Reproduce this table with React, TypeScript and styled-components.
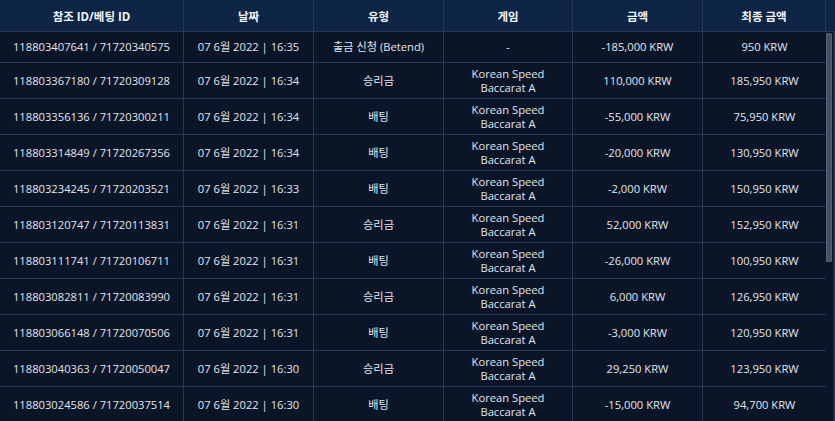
import React from "react";
import styled, { createGlobalStyle } from "styled-components";

const Global = createGlobalStyle`
  html, body { margin: 0; padding: 0; background: #0a1628; }
  body { font-family: "Open Sans", "Noto Sans CJK KR", sans-serif; }
`;

const COLS = "184px 130px 130px 129px 130px 1fr";
const LINE = "#26384f";

const Wrap = styled.div`
  width: 835px;
  height: 421px;
  display: flex;
  flex-direction: column;
  background: #0a1628;
  overflow: hidden;
`;

const HeadRow = styled.div`
  display: grid;
  grid-template-columns: ${COLS} 9px;
  height: 32px;
  flex: none;
  background: #0f2545;
  border-bottom: 1px solid ${LINE};
  box-sizing: border-box;
`;

const HeadCell = styled.div<{ $last?: boolean }>`
  display: flex;
  align-items: center;
  justify-content: center;
  color: #f2f5f9;
  font-weight: 700;
  font-size: 11.5px;
  border-right: ${(p) => (p.$last ? "none" : `1px solid ${LINE}`)};
`;

const BodyArea = styled.div`
  flex: 1;
  min-height: 0;
  display: flex;
`;

const Body = styled.div`
  flex: 1;
  overflow: hidden;
`;

const Track = styled.div`
  width: 9px;
  flex: none;
  display: flex;
  padding-top: 1px;
  box-sizing: border-box;
  background: #0a1628;
  border-right: 2px solid #1f3049;
`;

const Thumb = styled.div`
  width: 6px;
  height: 229px;
  background: #475163;
  border: 1px solid #566072;
  box-sizing: border-box;
  border-radius: 1px;
`;

const Row = styled.div`
  display: grid;
  grid-template-columns: ${COLS};
  min-height: 31px;
  border-bottom: 1px solid ${LINE};
  box-sizing: border-box;
`;

const Cell = styled.div<{ $last?: boolean }>`
  display: flex;
  align-items: center;
  justify-content: center;
  text-align: center;
  padding: 3.5px 6px;
  color: #e1e5ec;
  font-size: 11.2px;
  line-height: 14px;
  border-right: ${(p) => (p.$last ? "none" : `1px solid ${LINE}`)};
`;

type Tx = [string, string, string, string, string, string];

const GAME = "Korean Speed\nBaccarat A";

const rows: Tx[] = [
  ["118803407641 / 71720340575", "07 6월 2022 | 16:35", "출금 신청 (Betend)", "-", "-185,000 KRW", "950 KRW"],
  ["118803367180 / 71720309128", "07 6월 2022 | 16:34", "승리금", GAME, "110,000 KRW", "185,950 KRW"],
  ["118803356136 / 71720300211", "07 6월 2022 | 16:34", "배팅", GAME, "-55,000 KRW", "75,950 KRW"],
  ["118803314849 / 71720267356", "07 6월 2022 | 16:34", "배팅", GAME, "-20,000 KRW", "130,950 KRW"],
  ["118803234245 / 71720203521", "07 6월 2022 | 16:33", "배팅", GAME, "-2,000 KRW", "150,950 KRW"],
  ["118803120747 / 71720113831", "07 6월 2022 | 16:31", "승리금", GAME, "52,000 KRW", "152,950 KRW"],
  ["118803111741 / 71720106711", "07 6월 2022 | 16:31", "배팅", GAME, "-26,000 KRW", "100,950 KRW"],
  ["118803082811 / 71720083990", "07 6월 2022 | 16:31", "승리금", GAME, "6,000 KRW", "126,950 KRW"],
  ["118803066148 / 71720070506", "07 6월 2022 | 16:31", "배팅", GAME, "-3,000 KRW", "120,950 KRW"],
  ["118803040363 / 71720050047", "07 6월 2022 | 16:30", "승리금", GAME, "29,250 KRW", "123,950 KRW"],
  ["118803024586 / 71720037514", "07 6월 2022 | 16:30", "배팅", GAME, "-15,000 KRW", "94,700 KRW"],
];

const headers = ["참조 ID/베팅 ID", "날짜", "유형", "게임", "금액", "최종 금액"];

const Multi = ({ text }: { text: string }) => (
  <>
    {text.split("\n").map((t, i) => (
      <React.Fragment key={i}>
        {i > 0 && <br />}
        {t}
      </React.Fragment>
    ))}
  </>
);

export default function App() {
  return (
    <Wrap>
      <Global />
      <HeadRow>
        {headers.map((h) => (
          <HeadCell key={h}>{h}</HeadCell>
        ))}
        <HeadCell $last />
      </HeadRow>
      <BodyArea>
        <Body>
          {rows.map((r) => (
            <Row key={r[0]}>
              {r.map((c, i) => (
                <Cell key={i} $last={i === r.length - 1}>
                  <span>
                    <Multi text={c} />
                  </span>
                </Cell>
              ))}
            </Row>
          ))}
        </Body>
        <Track>
          <Thumb />
        </Track>
      </BodyArea>
    </Wrap>
  );
}
